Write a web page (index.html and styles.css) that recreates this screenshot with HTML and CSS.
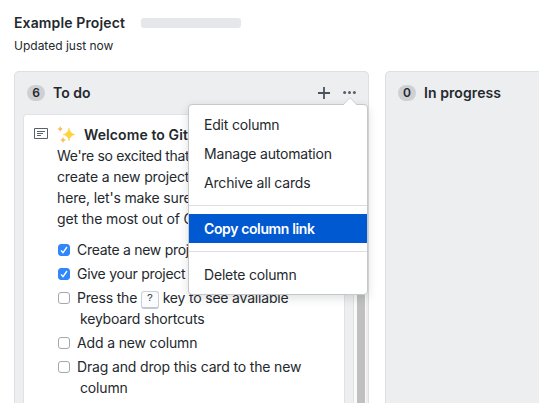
FILE: index.html
```html
<!DOCTYPE html>
<html lang="en">
<head>
<meta charset="utf-8">
<title>Example Project</title>
<link rel="stylesheet" href="styles.css">
</head>
<body>
<header class="project">
  <div class="project-title"><h1>Example Project</h1><span class="progress"></span></div>
  <p class="updated">Updated just now</p>
</header>
<main class="board">
  <section class="column">
    <div class="column-head">
      <span class="counter">6</span><h2 class="tight">To do</h2>
      <svg class="plus" width="12" height="12" viewBox="0 0 12 12"><path d="M6 0v12M0 6h12" stroke="#4b525a" stroke-width="1.8"/></svg>
      <div class="more">
        <svg width="13" height="4" viewBox="0 0 13 4" fill="#586069"><circle cx="1.6" cy="1.5" r="1.5"/><circle cx="6.5" cy="1.5" r="1.5"/><circle cx="11.4" cy="1.5" r="1.5"/></svg>
        <div class="menu">
          <svg class="caret" width="14" height="8" viewBox="0 0 14 8"><path d="M0 8L7 .7 14 8" fill="#fff" stroke="#c8cacc" stroke-width=".8"/></svg>
          <a class="item">Edit column</a>
          <a class="item">Manage automation</a>
          <a class="item">Archive all cards</a>
          <hr>
          <a class="item active">Copy column link</a>
          <hr>
          <a class="item last">Delete column</a>
        </div>
      </div>
    </div>
    <div class="column-body">
      <article class="card">
        <svg class="note" width="14" height="12" viewBox="0 0 14 12" fill="none" stroke="#59616b"><path d="M.5 .5h13v10H.5z"/><path d="M3 3.5h8M3 5.5h6M3 7.5h4"/></svg>
        <div class="content">
          <h3><svg width="19" height="19" viewBox="0 0 19 19"><path d="M12 3Q12.7 8.3 18 9.5 12.7 10.7 12 16 11.3 10.7 6 9.5 11.3 8.3 12 3z" fill="#ffd43b" stroke="#f8c94d" stroke-width=".4"/><path d="M3.2 1Q3.6 3.5 6 4 3.6 4.5 3.2 7 2.8 4.5.4 4 2.8 3.5 3.2 1zM6 12Q6.5 14.5 9 15 6.5 15.5 6 18 5.5 15.5 3 15 5.5 14.5 6 12z" fill="#f9bd62"/></svg>Welcome to Git</h3>
          <p><span class="snug">We're so excited that</span><br>create a new project<br>here, let's make sure<br>get the most out of G</p>
          <ul>
            <li class="done"><span class="box checked"><svg width="8" height="8" viewBox="0 0 8 8"><path d="M1 4.4L3 6.6 7 1" fill="none" stroke="#fff" stroke-width="1.4"/></svg></span>Create a new proj</li>
            <li class="done"><span class="box checked"><svg width="8" height="8" viewBox="0 0 8 8"><path d="M1 4.4L3 6.6 7 1" fill="none" stroke="#fff" stroke-width="1.4"/></svg></span>Give your project</li>
            <li class="shortcut"><span class="box"></span>Press the <kbd>?</kbd> key to see available<br><span class="wrap">keyboard shortcuts</span></li>
            <li><span class="box"></span>Add a new column</li>
            <li><span class="box"></span>Drag and drop this card to the new<br><span class="wrap">column</span></li>
          </ul>
        </div>
      </article>
      <div class="scroll"><div class="thumb"></div></div>
    </div>
  </section>
  <section class="column next">
    <div class="column-head"><span class="counter">0</span><h2>In progress</h2></div>
  </section>
</main>
</body>
</html>
```
FILE: styles.css
```css
* { box-sizing: border-box; }
body { margin: 0; height: 403px; overflow: hidden; background: #fff; color: #24292e; font: 14px/21px Inter, sans-serif; }
h1, h2, h3, p, ul { margin: 0; padding: 0; font-size: 14px; line-height: 21px; white-space: nowrap; }
h1, h2, h3 { font-weight: 600; }
.project { height: 71px; padding: 12px 0 0 14px; }
.project-title { display: flex; align-items: center; gap: 16px; }
.project-title h1 { width: 111px; letter-spacing: .13px; }
.progress { width: 100px; height: 10px; border-radius: 3px; background: #e5e7eb; }
.updated { font-size: 12px; margin-top: 2px; }
.board { display: flex; gap: 16px; height: 332px; padding-left: 14px; overflow: hidden; }
.column { flex: 0 0 355px; height: 332px; background: #edeef0; border: 1px solid #dcdfe4; border-bottom: 0; border-radius: 5px 5px 0 0; }
.column.next { flex: 1 1 0; min-width: 0; border-right: 0; border-top-right-radius: 0; }
.column-head { display: flex; align-items: center; height: 42px; padding: 0 12px; }
.counter { width: 18px; height: 16px; border-radius: 8px; background: #ced0d3; font-weight: 600; font-size: 12px; line-height: 16px; text-align: center; }
.column-head h2 { margin: -1px 0 0 8px; letter-spacing: .08px; }
.column-head .tight { letter-spacing: 0; }
.plus { margin: -1px 0 0 auto; }
.more { position: relative; margin-left: 13px; display: flex; }
.menu { position: absolute; z-index: 2; top: 13px; right: -12px; width: 180px; height: 191px; padding: 5px 0; background: #fff; border: 1px solid #c5c7ca; border-radius: 4px; box-shadow: 0 3px 10px rgba(27,31,35,.15); }
.caret { position: absolute; top: -8px; right: 10px; }
.item { display: block; height: 29px; padding-left: 15px; line-height: 29px; letter-spacing: -.19px; white-space: nowrap; }
.item.active { background: #0059d1; color: #fff; font-weight: 600; letter-spacing: -.38px; }
.item.last { margin-top: 1px; }
hr { height: 1px; margin: 8px 0; border: 0; background: #dcdfe2; }
.column-body { display: flex; justify-content: space-between; height: 290px; padding-left: 8px; overflow: hidden; }
.card { display: flex; width: 322px; height: 290px; background: #fff; border: 1px solid #dfe2e6; border-bottom: 0; border-radius: 4px 4px 0 0; overflow: hidden; }
.note { flex: none; margin: 13px 0 0 10px; }
.content { margin-left: 9px; padding-top: 9px; letter-spacing: -.15px; }
h3 { display: flex; align-items: center; height: 20px; margin-bottom: 1px; letter-spacing: .1px; }
h3 svg { margin-right: 8px; }
.snug { letter-spacing: -.32px; }
ul { list-style: none; margin-top: 10px; }
li { height: 21px; margin-bottom: 3px; padding-left: 20px; position: relative; }
li.done { letter-spacing: -.28px; }
li.shortcut { height: 42px; letter-spacing: -.19px; }
.box { position: absolute; left: 1px; top: 5px; width: 12px; height: 12px; border: 1px solid #a5a7aa; border-radius: 3px; background: #fff; }
.checked { background: #2f87fb; border-color: #2f87fb; display: grid; place-items: center; }
.wrap { margin-left: 3px; }
kbd { display: inline-block; width: 18px; height: 18px; margin: -4px 0; border: 1px solid #cbd0d6; border-bottom: 2px solid #c2c8cf; border-radius: 3px; background: #fafbfc; font: 10px/14px "Liberation Mono", monospace; text-align: center; position: relative; top: -2px; }
.scroll { width: 15px; border-left: 1px solid #dfe2e4; background: #fafafa; border-right: 2px solid #eee; }
.thumb { width: 8px; height: 290px; margin-left: 3px; background: #c0c0c0; }
```
